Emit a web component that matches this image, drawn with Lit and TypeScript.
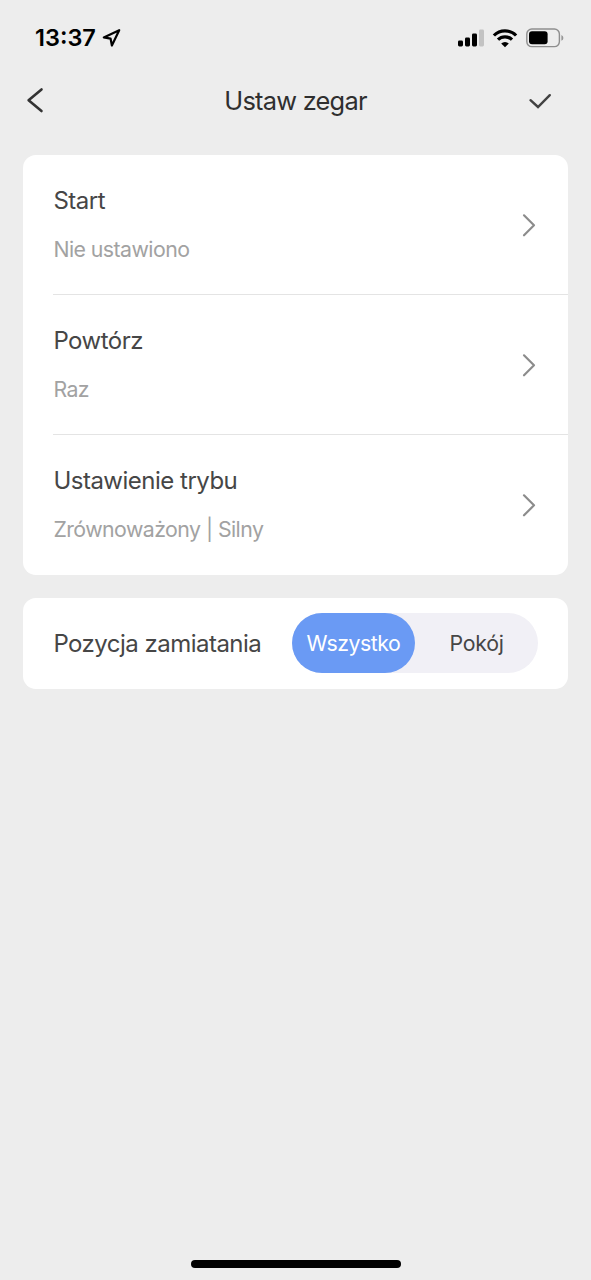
import { LitElement, html, css } from "lit";
import { customElement, property, state } from "lit/decorators.js";

@customElement("status-bar")
class StatusBar extends LitElement {
  static styles = css`
    :host { display: flex; align-items: center; justify-content: space-between; height: 74px; padding: 2px 27.5px 0 35px; box-sizing: border-box; }
    .left, .right { display: flex; align-items: center; }
    .time { font-size: 23.5px; font-weight: 600; line-height: 30px; color: #000; letter-spacing: 0; width: 67px; white-space: nowrap; }
    svg { display: block; }
    .wifi { margin-left: 8px; }
    .battery { margin-left: 8px; }
  `;
  render() {
    return html`
      <div class="left">
        <span class="time">13:37</span>
        <svg width="20" height="22" viewBox="0 0 20 22">
          <path d="M17.2 3.2 1.8 10.4 8.6 11.7 9.9 18.5Z" fill="none" stroke="#000" stroke-width="2.2" stroke-linejoin="round" />
        </svg>
      </div>
      <div class="right">
        <svg width="26" height="18" viewBox="0 0 26 18">
          <rect x="0" y="11.5" width="5" height="6" rx="1.4" />
          <rect x="7" y="8.5" width="5" height="9" rx="1.4" />
          <rect x="14" y="4.5" width="5" height="13" rx="1.4" />
          <rect x="21" y="0.5" width="5" height="17" rx="1.4" fill="#c3c3c3" />
        </svg>
        <svg class="wifi" width="26" height="20" viewBox="0 0 26 20">
          <g fill="none" stroke="#000" stroke-width="3.2">
            <path d="M1.9 7.5a15.6 15.6 0 0 1 22.2 0" />
            <path d="M6 11.7a9.9 9.9 0 0 1 14 0" />
          </g>
          <path d="M13 19.2 9.2 15.4a5.5 5.5 0 0 1 7.6 0Z" />
        </svg>
        <svg class="battery" width="38" height="20" viewBox="0 0 38 20">
          <rect x=".8" y="1" width="32.6" height="17.6" rx="5" fill="none" stroke="#8e8e8e" stroke-width="1.4" />
          <rect x="3" y="3.3" width="18.6" height="13" rx="3" />
          <path d="M35.4 7q2 .9 2 2.9t-2 2.9Z" fill="#969696" />
        </svg>
      </div>
    `;
  }
}

@customElement("setting-row")
class SettingRow extends LitElement {
  @property() label = "";
  @property() value = "";
  static styles = css`
    :host { display: flex; align-items: center; justify-content: space-between; height: 140px; padding: 1px 32px 0 0; box-sizing: border-box; border-bottom: 1px solid #e4e4e4; }
    :host(:last-child) { border-bottom-color: transparent; }
    .text { display: flex; flex-direction: column; gap: 18px; padding-top: 1px; }
    .label { font-size: 24px; line-height: 30px; color: #464646; letter-spacing: -0.5px; }
    .value { font-size: 21.3px; line-height: 30px; color: #a2a2a2; letter-spacing: -0.55px; }
    svg { display: block; }
  `;
  render() {
    return html`
      <div class="text">
        <span class="label">${this.label}</span>
        <span class="value">${this.value}</span>
      </div>
      <svg width="14" height="24" viewBox="0 0 14 24">
        <path d="M2 2.3 12 12.3 2 22.3" fill="none" stroke="#8c8c8c" stroke-width="2.2" stroke-linecap="round" stroke-linejoin="round" />
      </svg>
    `;
  }
}

@customElement("app-root")
class AppRoot extends LitElement {
  @state() private selected = 0;
  private options = ["Wszystko", "Pokój"];
  static styles = css`
    :host { display: flex; flex-direction: column; height: 1280px; box-sizing: border-box; background: #ededed; font-family: Inter, "Liberation Sans", sans-serif; font-weight: 400; }
    .nav { display: grid; grid-template-columns: 60px 1fr 60px; align-items: center; height: 53px; padding: 0 20px 0 20px; }
    .title { text-align: center; font-size: 25.4px; line-height: 32px; color: #2f2f2f; font-weight: 400; letter-spacing: -0.75px; margin: 0; }
    .back { margin: -1px 0 0 6px; }
    .done { justify-self: end; margin-right: 18px; }
    svg { display: block; }
    main { display: flex; flex-direction: column; gap: 23px; padding: 27.5px 23px 0; flex: 1; }
    .card { background: #fff; border-radius: 13px; padding-left: 30.4px; }
    .sweep { display: flex; align-items: center; justify-content: space-between; height: 91px; padding-right: 30px; }
    .label { font-size: 24px; line-height: 30px; color: #464646; letter-spacing: -0.52px; padding-top: 1px; }
    .toggle { display: flex; width: 246px; height: 60.5px; border-radius: 31px; background: #f1f0f6; }
    .option { flex: 1; border: 0; padding: 0; border-radius: 31px; background: none; color: #464646; font: inherit; font-size: 21.3px; letter-spacing: -0.25px; }
    .option.on { background: #6a9af4; color: #fff; letter-spacing: -0.45px; }
    footer { display: flex; justify-content: center; padding: 0 0 12.5px 1px; }
    .home { width: 210px; height: 8px; border-radius: 4px; background: #000; }
  `;
  render() {
    return html`
      <status-bar></status-bar>
      <header class="nav">
        <svg class="back" width="20" height="28" viewBox="0 0 20 28">
          <path d="M15.5 3.4 2.6 14.2 15.5 25" fill="none" stroke="#333" stroke-width="2.6" stroke-linecap="round" stroke-linejoin="round" />
        </svg>
        <h1 class="title">Ustaw zegar</h1>
        <svg class="done" width="26" height="20" viewBox="0 0 26 20">
          <path d="M3.5 9.2 11 16 22.8 4.2" fill="none" stroke="#424242" stroke-width="2.4" stroke-linecap="round" />
        </svg>
      </header>
      <main>
        <section class="card">
          <setting-row label="Start" value="Nie ustawiono"></setting-row>
          <setting-row label="Powtórz" value="Raz"></setting-row>
          <setting-row label="Ustawienie trybu" value="Zrównoważony | Silny"></setting-row>
        </section>
        <section class="card sweep">
          <span class="label">Pozycja zamiatania</span>
          <div class="toggle">
            ${this.options.map((name, i) => html`
              <button class="option ${i === this.selected ? "on" : ""}" @click=${() => (this.selected = i)}>${name}</button>
            `)}
          </div>
        </section>
      </main>
      <footer><div class="home"></div></footer>
    `;
  }
}
